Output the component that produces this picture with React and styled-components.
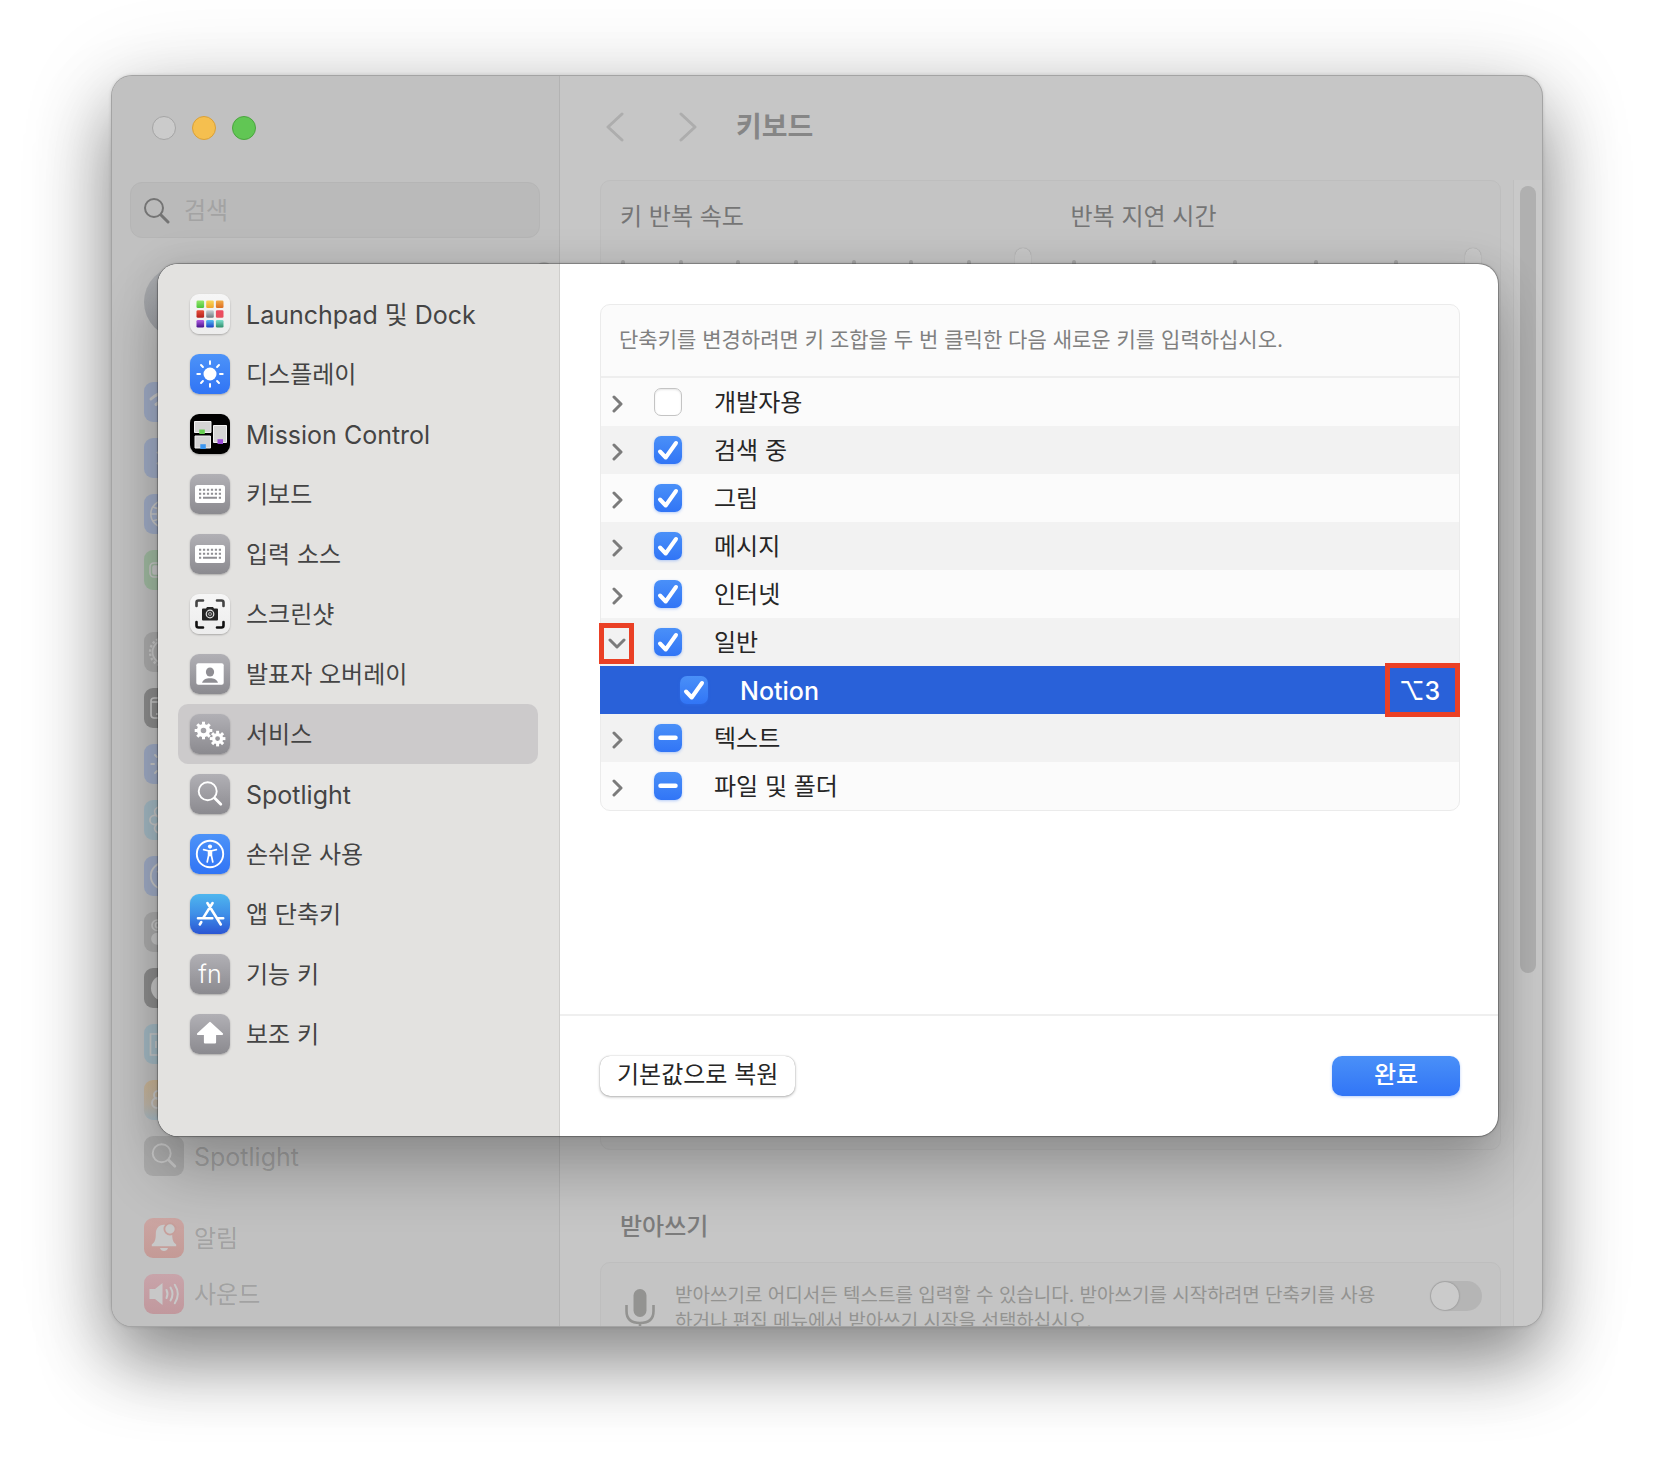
import React, { useEffect, useRef, useState } from "react";
import styled, { createGlobalStyle, css } from "styled-components";

const shortcuts = [
  { id: "launchpad", label: "Launchpad 및 Dock", tone: "white", latin: true },
  { id: "display", label: "디스플레이", tone: "blue" },
  { id: "mission", label: "Mission Control", tone: "black", latin: true },
  { id: "keyboard", label: "키보드", tone: "gray" },
  { id: "keyboard", label: "입력 소스", tone: "gray" },
  { id: "screenshot", label: "스크린샷", tone: "white" },
  { id: "presenter", label: "발표자 오버레이", tone: "gray" },
  { id: "services", label: "서비스", tone: "gray" },
  { id: "search", label: "Spotlight", tone: "gray", latin: true },
  { id: "access", label: "손쉬운 사용", tone: "blue" },
  { id: "appstore", label: "앱 단축키", tone: "store" },
  { id: "fn", label: "기능 키", tone: "gray" },
  { id: "shift", label: "보조 키", tone: "gray" },
];

const services = [
  { label: "개발자용", state: "off" },
  { label: "검색 중", state: "on" },
  { label: "그림", state: "on" },
  { label: "메시지", state: "on" },
  { label: "인터넷", state: "on" },
  { label: "일반", state: "on", open: true },
  { label: "Notion", state: "on", latin: true, child: true, keys: "⌥3" },
  { label: "텍스트", state: "mixed" },
  { label: "파일 및 폴더", state: "mixed" },
];

const settings = [
  [
    { id: "wifi", tone: "dimBlue" },
    { id: "bluetooth", tone: "dimBlue" },
    { id: "globe", tone: "dimBlue" },
    { id: "battery", tone: "dimGreen" },
  ],
  [
    { id: "gear", tone: "dimGray" },
    { id: "dock", tone: "dimBlack" },
    { id: "display", tone: "dimBlue" },
    { id: "flower", tone: "dimCyan" },
    { id: "access", tone: "dimBlue" },
    { id: "control", tone: "dimGray" },
    { id: "siri", tone: "dimBlack" },
    { id: "privacy", tone: "dimCyan" },
    { id: "people", tone: "dimOrange" },
    { id: "search", tone: "dimGray", label: "Spotlight", latin: true },
  ],
  [
    { id: "bell", tone: "dimRed", label: "알림" },
    { id: "sound", tone: "dimPink", label: "사운드" },
  ],
];

const tones = {
  white: "linear-gradient(#f6f6f6, #ededed)",
  blue: "linear-gradient(#4d93f8, #3074f5)",
  black: "#000000",
  gray: "linear-gradient(#b1b0b5, #8b8a8f)",
  store: "linear-gradient(#4fb6ee, #3f8fe8 50%, #2a55d3)",
  dimBlue: "#a0acc6",
  dimGreen: "#a1bba2",
  dimGray: "#acacac",
  dimBlack: "#8d8d8d",
  dimCyan: "#a4bac4",
  dimOrange: "linear-gradient(#cbb595, #c0b6a8 60%, #a8bac4)",
  dimRed: "linear-gradient(#cba5a2, #c49a96)",
  dimPink: "linear-gradient(#c8a4aa, #c1989d)",
};

const pads = [
  ["#93e86b", "#4cc33a"],
  ["#f9d75b", "#efa62c"],
  ["#f2ac4a", "#dd6d22"],
  ["#e8503c", "#b31f1a"],
  ["#c9d0d6", "#6f7a80"],
  ["#ee4a63", "#e6505c"],
  ["#b55fe6", "#45118a"],
  ["#54c0f5", "#1c3fc4"],
  ["#7fe0cf", "#2f8f6b"],
];

const around = (count) => [...Array(count)].map((_, i) => (360 / count) * i);

const Cog = ({ x, y, r, hole, teeth }) => (
  <g transform={`translate(${x} ${y})`} stroke="currentColor" fill="none">
    <circle r={(r + hole) / 2 - 0.6} strokeWidth={r - hole - 1.2} />
    {around(teeth).map((deg) => (
      <path key={deg} d={`M0 ${2 - r}V${-r - 1}`} strokeWidth="3" transform={`rotate(${deg})`} />
    ))}
  </g>
);

const glyphs = {
  launchpad: (
    <>
      {pads.map(([from, to], i) => (
        <g key={from}>
          <linearGradient id={`pad${i}`} x2="0" y2="1">
            <stop stopColor={from} />
            <stop offset="1" stopColor={to} />
          </linearGradient>
          <rect
            x={6.5 + (i % 3) * 9.7}
            y={6.5 + Math.floor(i / 3) * 9.7}
            width="7.6"
            height="7.6"
            rx="1.3"
            fill={`url(#pad${i})`}
          />
        </g>
      ))}
    </>
  ),
  display: (
    <>
      <circle cx="20" cy="20" r="6.5" fill="currentColor" />
      {around(8).map((deg) => (
        <path
          key={deg}
          d="M20 10V7.3"
          stroke="currentColor"
          strokeWidth="2"
          strokeLinecap="round"
          transform={`rotate(${deg} 20 20)`}
        />
      ))}
    </>
  ),
  mission: (
    <>
      <g fill="#d4d4d4" stroke="#f2f2f2">
        <path d="M4.500 7.500h16.500v11h-16.500zM5 22h15.500v12h-15.500zM23.500 11.500h13v17h-13z" />
      </g>
      <path d="M9.300 15.500h5.500v4.500h-5.500z" fill="#66cf50" />
      <path d="M10.300 30.200h5.500v4.800h-5.500z" fill="#3d97ef" />
      <path d="M27.500 25.200h5.500v4.800h-5.500z" fill="#9b4fd6" />
    </>
  ),
  keyboard: (
    <>
      <rect x="5" y="11" width="30" height="18" rx="2.5" fill="#fff" />
      <g stroke="#8f8e93" strokeWidth="2" fill="none">
        <path d="M9 15.800h22M9 19.700h22" strokeDasharray="2.200 1.760" />
        <path d="M9 23.700h2.200M13 23.700h14M28.800 23.700h2.200" />
      </g>
    </>
  ),
  screenshot: (
    <>
      <g fill="none" strokeWidth="2.6" strokeLinecap="round">
        <path d="M6.500 12V8.500q0-2 2-2H13M27 6.500h4.500q2 0 2 2V12" stroke="#444" />
        <path d="M6.500 28v3.500q0 2 2 2H13M27 33.500h4.500q2 0 2-2V28" stroke="#111" />
      </g>
      <path d="M13 14.500h3l1-1.500h6l1 1.500h3q1 0 1 1v10q0 1-1 1H13q-1 0-1-1v-10q0-1 1-1z" fill="#222" />
      <circle cx="20" cy="20" r="3.8" fill="#333" stroke="#e4e4e4" strokeWidth="1.2" />
      <circle cx="20" cy="20" r="1.5" fill="none" stroke="#bbb" strokeWidth=".8" />
    </>
  ),
  presenter: (
    <>
      <rect x="6.3" y="9.2" width="27.4" height="21.5" rx="2" fill="#fff" />
      <ellipse cx="20" cy="18" rx="4.1" ry="4.6" fill="#8f8e93" />
      <path d="M12 28.800c1-3.300 4-4.600 8-4.600s7 1.300 8 4.600z" fill="#8f8e93" />
    </>
  ),
  services: (
    <>
      <Cog x={13.5} y={16.5} r={7.8} hole={2.8} teeth={8} />
      <Cog x={27.6} y={24.6} r={6.8} hole={2.4} teeth={8} />
    </>
  ),
  search: (
    <g fill="none" stroke="currentColor" strokeLinecap="round">
      <circle cx="17.7" cy="17.2" r="9" strokeWidth="1.9" />
      <path d="M24.800 24.300l6 6" strokeWidth="2.8" />
    </g>
  ),
  access: (
    <>
      <circle cx="20" cy="20" r="13.2" fill="none" stroke="currentColor" strokeWidth="1.9" />
      <circle cx="20" cy="12.6" r="2.1" fill="currentColor" />
      <path
        d="M13.600 15.600l4.600 1.200h3.600l4.600-1.200M18.600 17v4.500L17.200 28M21.400 17v4.500L22.800 28M20 16.500v5"
        fill="none"
        stroke="currentColor"
        strokeWidth="1.7"
        strokeLinecap="round"
        strokeLinejoin="round"
      />
    </>
  ),
  appstore: (
    <path
      d="M22.600 9l-9.200 14.600M17.400 9l13.400 21.500M8 24.300h14.300M27.500 24.300h5.700M11.300 28l-1.500 2.500"
      stroke="#fff"
      strokeWidth="2.6"
      strokeLinecap="round"
      fill="none"
    />
  ),
  shift: (
    <path
      d="M20 9L8 20h7v8.500h10V20h7z"
      fill="#fff"
      stroke="#fff"
      strokeWidth="2.2"
      strokeLinejoin="round"
    />
  ),
  wifi: (
    <g fill="none" stroke="currentColor" strokeWidth="3" strokeLinecap="round">
      <path d="M7 17q13-12 26 0M12 22.500q8-7 16 0M17 28q3-2.500 6 0" />
    </g>
  ),
  bluetooth: (
    <path d="M13 14l14 12-7 6V8l7 6-14 12" fill="none" stroke="currentColor" strokeWidth="2" />
  ),
  globe: (
    <g fill="none" stroke="currentColor" strokeWidth="1.6">
      <circle cx="20" cy="20" r="13.2" />
      <ellipse cx="20" cy="20" rx="6.5" ry="13.2" />
      <path d="M20 7v26M7 20h26M9 13q11 5 22 0M9 27q11-5 22 0" />
    </g>
  ),
  battery: (
    <g fill="none" stroke="currentColor" strokeWidth="1.6">
      <rect x="6" y="13" width="26" height="14" rx="4" />
      <rect x="9" y="16" width="16" height="8" rx="1.5" fill="currentColor" />
      <path d="M34.500 18v4" strokeWidth="2.5" />
    </g>
  ),
  gear: (
    <g fill="none" stroke="currentColor">
      <circle cx="20" cy="20" r="11.5" strokeWidth="1.8" />
      <circle cx="20" cy="20" r="14" strokeWidth="2.4" strokeDasharray="2.4 2" />
      <circle cx="20" cy="20" r="4" strokeWidth="1.8" />
    </g>
  ),
  dock: (
    <g fill="none" stroke="currentColor" strokeWidth="1.7">
      <rect x="7" y="10" width="26" height="20" rx="3" />
      <path d="M7 14h26M12 26h2.500M18.500 26H21M25 26h2.500" />
    </g>
  ),
  flower: (
    <g fill="none" stroke="currentColor" strokeWidth="1.7">
      {around(6).map((deg) => (
        <circle key={deg} cx="20" cy="10.5" r="4.6" transform={`rotate(${deg + 30} 20 20)`} />
      ))}
    </g>
  ),
  control: (
    <g fill="none" stroke="currentColor" strokeWidth="1.7">
      <rect x="8" y="8" width="24" height="10.5" rx="5.2" />
      <circle cx="14" cy="13.2" r="2.5" />
      <rect x="8" y="21.5" width="24" height="10.5" rx="5.2" fill="currentColor" />
    </g>
  ),
  siri: <circle cx="20" cy="20" r="13" fill="currentColor" />,
  privacy: (
    <g fill="none" stroke="currentColor" strokeWidth="1.7">
      <path d="M6.500 10h27v21h-27zM12 17v7M15 20h8" />
    </g>
  ),
  people: (
    <g fill="none" stroke="currentColor" strokeWidth="2">
      <circle cx="14" cy="15" r="4" />
      <circle cx="13" cy="23" r="5" />
      <circle cx="26" cy="20" r="6" />
    </g>
  ),
  bell: (
    <>
      <path
        d="M20 6.800c-5.500 0-8.200 4-8.200 9.200 0 6-1 8-4 10.500v1.800h24.400v-1.800c-3-2.500-4-4.500-4-10.500C28.200 10.800 25.500 6.800 20 6.800zM16 30h8c-.5 2-2 3-4 3s-3.500-1-4-3z"
        fill="currentColor"
      />
      <circle cx="26" cy="11" r="5.6" fill="currentColor" stroke="#c79f9b" strokeWidth="1.8" />
    </>
  ),
  sound: (
    <>
      <path d="M5.500 15h5.500l7.500-6v22L11 25H5.500z" fill="currentColor" strokeLinejoin="round" />
      <path
        d="M22.500 16q2 4 0 8M26.500 13.500q4 6.500 0 13M30.800 10.800q6 9.200 0 18.400"
        fill="none"
        stroke="currentColor"
        strokeWidth="2"
        strokeLinecap="round"
      />
    </>
  ),
};

const Icon = ({ id, tone }) => (
  <Tile $tone={tone}>
    {id === "fn" ? (
      "fn"
    ) : (
      <svg width="40" height="40" viewBox="0 0 40 40" aria-hidden="true">
        {glyphs[id]}
      </svg>
    )}
  </Tile>
);

const Chevron = ({ points, width, height, stroke }) => (
  <svg width={width} height={height} viewBox={`0 0 ${width} ${height}`} aria-hidden="true">
    <polyline
      points={points}
      fill="none"
      stroke="currentColor"
      strokeWidth={stroke}
      strokeLinecap="round"
      strokeLinejoin="round"
    />
  </svg>
);

const Slider = ({ label, ticks }) => (
  <Field>
    {label}
    <Scale>
      <Ticks>
        {[...Array(ticks)].map((_, i) => (
          <i key={i} />
        ))}
      </Ticks>
      <Range type="range" min="1" max={ticks} defaultValue={ticks} />
    </Scale>
  </Field>
);

const ServiceRow = ({ item }) => {
  const [state, setState] = useState(item.state);
  const box = useRef(null);

  useEffect(() => {
    box.current.indeterminate = state === "mixed";
  }, [state]);

  return (
    <Row $child={item.child}>
      {!item.child && (
        <Disclosure type="button" aria-label={item.label} aria-expanded={!!item.open}>
          {item.open ? (
            <Chevron points="2,2 9,9 16,2" width={18} height={11} stroke={3} />
          ) : (
            <Chevron points="2,2 9,9 2,16" width={11} height={18} stroke={3} />
          )}
          {item.open && <Marker />}
        </Disclosure>
      )}
      <RowLabel>
        <Check>
          <input
            ref={box}
            type="checkbox"
            checked={state === "on"}
            onChange={(e) => setState(e.target.checked ? "on" : "off")}
          />
          <svg width="28" height="28" viewBox="0 0 28 28" aria-hidden="true">
            {state === "on" && <path d="M6 15.500l5.700 6L22 7" />}
            {state === "mixed" && <path d="M6.500 13.800h15" strokeWidth="4.5" />}
          </svg>
        </Check>
        <Text $latin={item.latin}>{item.label}</Text>
      </RowLabel>
      {item.keys && (
        <Keys>
          <Text $latin>{item.keys}</Text>
          <Marker />
        </Keys>
      )}
    </Row>
  );
};

const App = () => {
  const [active, setActive] = useState("서비스");

  return (
    <>
      <GlobalStyle />
      <Page>
        <Window>
          <Sidebar>
            <Lights>
              <Light $color="#cbcbcb" $edge="#a5a5a5" aria-label="닫기" />
              <Light $color="#f5bf4f" $edge="#d9a038" aria-label="최소화" />
              <Light $color="#61c654" $edge="#4ba53f" aria-label="확대" />
            </Lights>
            <Search>
              <svg width="28" height="28" viewBox="0 0 28 28" aria-hidden="true">
                <circle cx="11" cy="12" r="9" />
                <path d="M18 19l7 7" strokeWidth="3" />
              </svg>
              <input type="text" placeholder="검색" aria-label="검색" />
            </Search>
            <Scroller>
              <div>
                <Avatar />
                {settings.map((group, i) => (
                  <Group key={i}>
                    {group.map((item) => (
                      <li key={item.id}>
                        <Icon id={item.id} tone={item.tone} />
                        {item.label && <Text $latin={item.latin}>{item.label}</Text>}
                      </li>
                    ))}
                  </Group>
                ))}
              </div>
              <SideThumb />
            </Scroller>
          </Sidebar>
          <Main>
            <Header>
              <NavButton type="button" aria-label="뒤로">
                <Chevron points="16,2 2,15 16,28" width={18} height={30} stroke={3} />
              </NavButton>
              <NavButton type="button" aria-label="앞으로">
                <Chevron points="2,2 16,15 2,28" width={18} height={30} stroke={3} />
              </NavButton>
              <h1>키보드</h1>
            </Header>
            <Body>
              <Content>
                <Card $tall>
                  <Slider label="키 반복 속도" ticks={8} />
                  <Slider label="반복 지연 시간" ticks={6} />
                </Card>
                <h2>받아쓰기</h2>
                <Card>
                  <Dictation>
                    <svg width="30" height="44" viewBox="0 0 30 44" aria-hidden="true">
                      <rect x="8.5" y="1" width="13" height="28" rx="6.5" fill="currentColor" />
                      <path
                        d="M1.500 17v6q0 12 13.500 12t13.500-12v-6M15 35v7"
                        fill="none"
                        stroke="currentColor"
                        strokeWidth="2.6"
                      />
                    </svg>
                    <p id="dictation">
                      받아쓰기로 어디서든 텍스트를 입력할 수 있습니다. 받아쓰기를 시작하려면 단축키를 사용
                      <br />
                      하거나 편집 메뉴에서 받아쓰기 시작을 선택하십시오.
                    </p>
                    <Switch type="checkbox" role="switch" aria-labelledby="dictation" />
                  </Dictation>
                </Card>
              </Content>
              <Scrollbar>
                <span />
              </Scrollbar>
            </Body>
          </Main>
          <Modal role="dialog" aria-label="키보드 단축키">
            <Menu>
              {shortcuts.map((item) => (
                <MenuItem
                  key={item.label}
                  type="button"
                  $active={item.label === active}
                  onClick={() => setActive(item.label)}
                >
                  <Icon id={item.id} tone={item.tone} />
                  <Text $latin={item.latin}>{item.label}</Text>
                </MenuItem>
              ))}
            </Menu>
            <Panel>
              <List>
                <ListHead>
                  단축키를 변경하려면 키 조합을 두 번 클릭한 다음 새로운 키를 입력하십시오.
                </ListHead>
                <ul>
                  {services.map((item) => (
                    <ServiceRow key={item.label} item={item} />
                  ))}
                </ul>
              </List>
              <Footer>
                <Button type="button">기본값으로 복원</Button>
                <Button type="button" $primary>
                  완료
                </Button>
              </Footer>
            </Panel>
          </Modal>
        </Window>
      </Page>
    </>
  );
};

export default App;

const GlobalStyle = createGlobalStyle`
  * {
    box-sizing: border-box;
    margin: 0;
    padding: 0;
  }
  body {
    background: #ffffff;
    font-family: Inter, "Noto Sans CJK KR", sans-serif;
    font-size: 24px;
    line-height: 32px;
    color: #262626;
  }
  button,
  input {
    font: inherit;
    color: inherit;
    border: 0;
    background: none;
  }
  ul {
    list-style: none;
  }
  svg {
    display: block;
    flex-shrink: 0;
  }
`;

const Page = styled.main`
  height: 100vh;
  min-height: 1200px;
  padding: 76px 112px 148px;
  overflow: hidden;
`;

const Window = styled.div`
  position: relative;
  display: grid;
  grid-template-columns: 448px 1fr;
  height: 100%;
  border-radius: 20px;
  overflow: hidden;
  background: #c6c6c6;
  box-shadow: 0 0 0 1px #a4a4a4, 0 0 4px rgba(0, 0, 0, 0.2), 0 36px 72px rgba(0, 0, 0, 0.42),
    0 10px 100px rgba(0, 0, 0, 0.14);
`;

const Sidebar = styled.aside`
  display: flex;
  flex-direction: column;
  min-height: 0;
  padding: 40px 0 0 18px;
  background: #c1c1c1;
  border-right: 1px solid #b3b3b3;
`;

const Lights = styled.div`
  display: flex;
  gap: 16px;
  padding-left: 22px;
`;

const Light = styled.button`
  width: 24px;
  height: 24px;
  border-radius: 50%;
  border: 1px solid ${({ $edge }) => $edge};
  background: ${({ $color }) => $color};
`;

const Search = styled.label`
  display: flex;
  align-items: center;
  gap: 13px;
  height: 56px;
  margin: 42px 19px 24px 0;
  padding: 0 12px;
  border: 1px solid #b5b5b5;
  border-radius: 12px;
  background: #bababa;
  svg {
    fill: none;
    stroke: #747474;
    stroke-width: 2;
    stroke-linecap: round;
  }
  input {
    flex: 1;
    min-width: 0;
    padding-top: 2px;
    outline: none;
    &::placeholder {
      color: #a3a3a3;
      opacity: 1;
    }
  }
`;

const Scroller = styled.div`
  display: flex;
  justify-content: space-between;
  flex: 1;
  min-height: 0;
  padding: 0 7px 0 14px;
  overflow: hidden;
`;

const SideThumb = styled.span`
  width: 16px;
  height: 600px;
  border-radius: 8px;
  background: #aaaaaa;
`;

const Avatar = styled.div`
  width: 72px;
  height: 72px;
  margin: 4px 0 44px;
  border-radius: 50%;
  background: linear-gradient(#acaeb1, #9c9ea3);
`;

const Group = styled.ul`
  display: flex;
  flex-direction: column;
  gap: 16px;
  margin-bottom: 42px;
  li {
    display: flex;
    align-items: center;
    gap: 10px;
    height: 40px;
    color: rgba(0, 0, 0, 0.18);
  }
`;

const Text = styled.span`
  padding-top: 2px;
  font-size: ${({ $latin }) => ($latin ? 25 : 24)}px;
`;

const Tile = styled.span`
  display: flex;
  align-items: center;
  justify-content: center;
  flex-shrink: 0;
  width: 40px;
  height: 40px;
  border-radius: 9px;
  font-size: 25px;
  font-weight: 300;
  background: ${({ $tone }) => tones[$tone]};
  color: ${({ $tone }) => ($tone.startsWith("dim") ? "#c8c8c8" : "#ffffff")};
  box-shadow: ${({ $tone }) =>
    $tone.startsWith("dim") ? "none" : "0 1px 2px rgba(0, 0, 0, 0.25)"};
`;

const Main = styled.section`
  display: flex;
  flex-direction: column;
  min-width: 0;
  min-height: 0;
`;

const Header = styled.header`
  display: flex;
  align-items: center;
  height: 104px;
  padding: 0 0 2px 46px;
  h1 {
    font-size: 28px;
    font-weight: 700;
    color: #868686;
  }
`;

const NavButton = styled.button`
  margin-right: 55px;
  color: #adadad;
  & + & {
    margin-right: 39px;
  }
`;

const Body = styled.div`
  display: flex;
  flex: 1;
  min-height: 0;
`;

const Content = styled.div`
  flex: 1;
  min-width: 0;
  padding: 0 12px 0 40px;
  overflow: hidden;
  h2 {
    margin: 61px 0 19px 20px;
    font-size: 24px;
    font-weight: 500;
    color: #7c7c7c;
  }
`;

const Card = styled.div`
  display: flex;
  align-items: flex-start;
  gap: 40px;
  padding: 18px;
  border: 1px solid #bebebe;
  border-radius: 10px;
  background: #c4c4c4;
  ${({ $tall }) =>
    $tall &&
    css`
      height: 970px;
      padding: 20px 19px;
    `}
`;

const Field = styled.label`
  flex: 1;
  color: #757575;
`;

const Scale = styled.span`
  display: grid;
  margin-top: 15px;
  & > * {
    grid-area: 1 / 1;
  }
`;

const Ticks = styled.span`
  display: flex;
  justify-content: space-between;
  padding: 12px 2px 0 1px;
  i {
    width: 4px;
    height: 16px;
    border-radius: 2px;
    background: #a6a6a6;
  }
  i:last-child {
    visibility: hidden;
  }
`;

const Range = styled.input`
  width: 100%;
  height: 40px;
  appearance: none;
  &::-webkit-slider-thumb {
    appearance: none;
    width: 16px;
    height: 40px;
    border-radius: 8px;
    background: #c8c8c8;
    box-shadow: 0 0 1px rgba(0, 0, 0, 0.3);
  }
`;

const Dictation = styled.div`
  display: flex;
  align-items: flex-start;
  flex: 1;
  padding-left: 6px;
  color: #939391;
  svg {
    margin-top: 7px;
  }
  p {
    flex: 1;
    margin-left: 20px;
    padding-top: 2px;
    font-size: 19px;
    line-height: 26px;
    white-space: nowrap;
  }
`;

const Switch = styled.input`
  appearance: none;
  width: 52px;
  height: 30px;
  padding: 1px;
  border-radius: 15px;
  background: #b5b5b5;
  &::before {
    content: "";
    display: block;
    width: 28px;
    height: 28px;
    border-radius: 50%;
    background: #cbcbcb;
    box-shadow: 0 0 2px rgba(0, 0, 0, 0.3);
  }
`;

const Scrollbar = styled.div`
  width: 29px;
  padding: 6px 0 0 6px;
  border-left: 1px solid #bfbfbf;
  background: #c9c9c9;
  span {
    display: block;
    width: 16px;
    height: 69%;
    border-radius: 8px;
    background: #b0b0b0;
  }
`;

const Modal = styled.div`
  position: absolute;
  top: 188px;
  left: 46px;
  right: 44px;
  display: grid;
  grid-template-columns: 402px 1fr;
  border-radius: 20px;
  background: #ffffff;
  box-shadow: 0 0 0 1px rgba(0, 0, 0, 0.2), 0 0 3px rgba(0, 0, 0, 0.3),
    0 36px 60px rgba(0, 0, 0, 0.24), 0 0 40px rgba(0, 0, 0, 0.1);
`;

const Menu = styled.nav`
  display: flex;
  flex-direction: column;
  padding: 20px 21px 72px 20px;
  border-right: 1px solid #cfcecc;
  border-radius: 20px 0 0 20px;
  background: #e3e2e0;
`;

const MenuItem = styled.button`
  display: flex;
  align-items: center;
  gap: 16px;
  height: 60px;
  padding: 0 12px;
  border-radius: 10px;
  color: #444444;
  text-align: left;
  background: ${({ $active }) => ($active ? "#cccacb" : "transparent")};
`;

const Panel = styled.div`
  display: flex;
  flex-direction: column;
  justify-content: space-between;
  min-width: 0;
`;

const List = styled.div`
  margin: 40px 38px 0 40px;
  border: 1px solid #ebebeb;
  border-radius: 10px;
  background: #fbfbfb;
`;

const ListHead = styled.p`
  height: 73px;
  padding: 19px 18px;
  border-bottom: 2px solid #eeeeee;
  font-size: 21px;
  color: #808080;
`;

const Row = styled.li`
  display: flex;
  align-items: center;
  height: 48px;
  &:nth-child(even) {
    background: #f2f2f2;
  }
  &:last-child {
    border-radius: 0 0 10px 10px;
  }
  ${({ $child }) =>
    $child &&
    css`
      margin: 0 -1px;
      padding-left: 80px;
      background: #2961d9;
      color: #ffffff;
      font-weight: 500;
    `}
`;

const Disclosure = styled.button`
  position: relative;
  display: flex;
  align-items: center;
  justify-content: center;
  width: 32px;
  height: 100%;
  padding-top: 3px;
  margin-right: 21px;
  color: #7b7b7b;
`;

const RowLabel = styled.label`
  display: flex;
  align-items: center;
  gap: 32px;
  flex: 1;
`;

const Check = styled.span`
  display: grid;
  & > * {
    grid-area: 1 / 1;
  }
  input {
    appearance: none;
    width: 28px;
    height: 28px;
    border: 1px solid #c4c4c4;
    border-radius: 7px;
    background: #ffffff;
    box-shadow: inset 0 1px 2px rgba(0, 0, 0, 0.1);
    &:checked,
    &:indeterminate {
      border: 0;
      background: linear-gradient(#4a90f8, #3175f6);
      box-shadow: 0 1px 3px rgba(49, 117, 246, 0.35);
    }
  }
  svg {
    pointer-events: none;
    fill: none;
    stroke: #ffffff;
    stroke-width: 4;
    stroke-linecap: round;
    stroke-linejoin: round;
  }
`;

const Keys = styled.kbd`
  position: relative;
  display: flex;
  align-items: center;
  justify-content: center;
  width: 75px;
  height: 100%;
  padding-right: 6px;
  font-family: inherit;
`;

const Marker = styled.span`
  position: absolute;
  border: 5px solid #ea4025;
  pointer-events: none;
  ${Disclosure} & {
    inset: 5px -1px 2px -2px;
  }
  ${Keys} & {
    inset: -3px 0;
  }
`;

const Footer = styled.footer`
  display: flex;
  justify-content: space-between;
  padding: 40px 38px 40px 40px;
  border-top: 2px solid #efefef;
`;

const Button = styled.button`
  height: 40px;
  border-radius: 10px;
  padding: 0 17px 2px;
  background: #ffffff;
  box-shadow: 0 0 1px rgba(0, 0, 0, 0.35), 0 1px 3px rgba(0, 0, 0, 0.3);
  ${({ $primary }) =>
    $primary &&
    css`
      min-width: 128px;
      background: linear-gradient(#4a90f8, #3175f6);
      box-shadow: 0 1px 3px rgba(49, 117, 246, 0.35);
      color: #ffffff;
      font-weight: 500;
    `}
`;
